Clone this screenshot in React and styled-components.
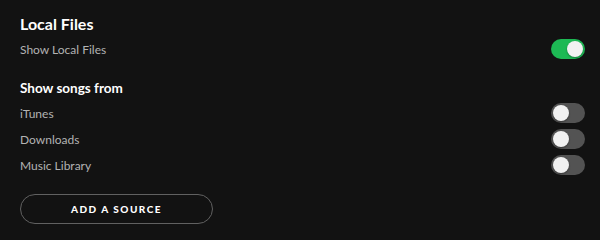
import React, { useState } from 'react';
import styled, { createGlobalStyle } from 'styled-components';

const GlobalStyle = createGlobalStyle`
  html, body {
    margin: 0;
    padding: 0;
    background: #121212;
  }
  body {
    font-family: Lato, 'Liberation Sans', Arial, sans-serif;
    -webkit-font-smoothing: antialiased;
  }
`;

const Page = styled.div`
  width: 600px;
  height: 232px;
  box-sizing: border-box;
  padding: 12px 15px 0 20px;
  background: #121212;
  overflow: hidden;
`;

const SectionTitle = styled.h2`
  margin: 0;
  height: 24px;
  line-height: 24px;
  font-size: 16px;
  font-weight: 700;
  color: #ffffff;
`;

const SubTitle = styled.h3`
  margin: 16px 0 2px;
  height: 20px;
  line-height: 20px;
  font-size: 13.5px;
  font-weight: 700;
  color: #ffffff;
`;

const Row = styled.div`
  display: flex;
  align-items: center;
  justify-content: space-between;
  height: 26px;
`;

const Label = styled.span`
  font-size: 12px;
  color: #b3b3b3;
`;

const Track = styled.button`
  position: relative;
  width: 34px;
  height: 20px;
  padding: 0;
  border: none;
  border-radius: 10px;
  cursor: pointer;
  background: ${p => (p.$on ? '#1db954' : '#535353')};

  &::after {
    content: '';
    position: absolute;
    top: 2px;
    left: ${p => (p.$on ? '16px' : '2px')};
    width: 16px;
    height: 16px;
    border-radius: 50%;
    background: #f1f1f1;
    box-shadow: 0 1px 2px rgba(0, 0, 0, 0.35);
  }
`;

const OutlineButton = styled.button`
  margin-top: 16px;
  width: 193px;
  height: 30px;
  border: 1px solid #616161;
  border-radius: 15px;
  background: transparent;
  color: #ffffff;
  font-family: Lato, 'Liberation Sans', Arial, sans-serif;
  font-size: 10px;
  font-weight: 900;
  letter-spacing: 1.5px;
  text-transform: uppercase;
  cursor: pointer;
`;

const Toggle = ({ initial }) => {
  const [on, setOn] = useState(initial);
  return <Track $on={on} onClick={() => setOn(!on)} aria-pressed={on} />;
};

const sources = ['iTunes', 'Downloads', 'Music Library'];

export default function App() {
  return (
    <Page>
      <GlobalStyle />
      <SectionTitle>Local Files</SectionTitle>
      <Row>
        <Label>Show Local Files</Label>
        <Toggle initial={true} />
      </Row>
      <SubTitle>Show songs from</SubTitle>
      {sources.map(s => (
        <Row key={s}>
          <Label>{s}</Label>
          <Toggle initial={false} />
        </Row>
      ))}
      <OutlineButton>Add a source</OutlineButton>
    </Page>
  );
}
